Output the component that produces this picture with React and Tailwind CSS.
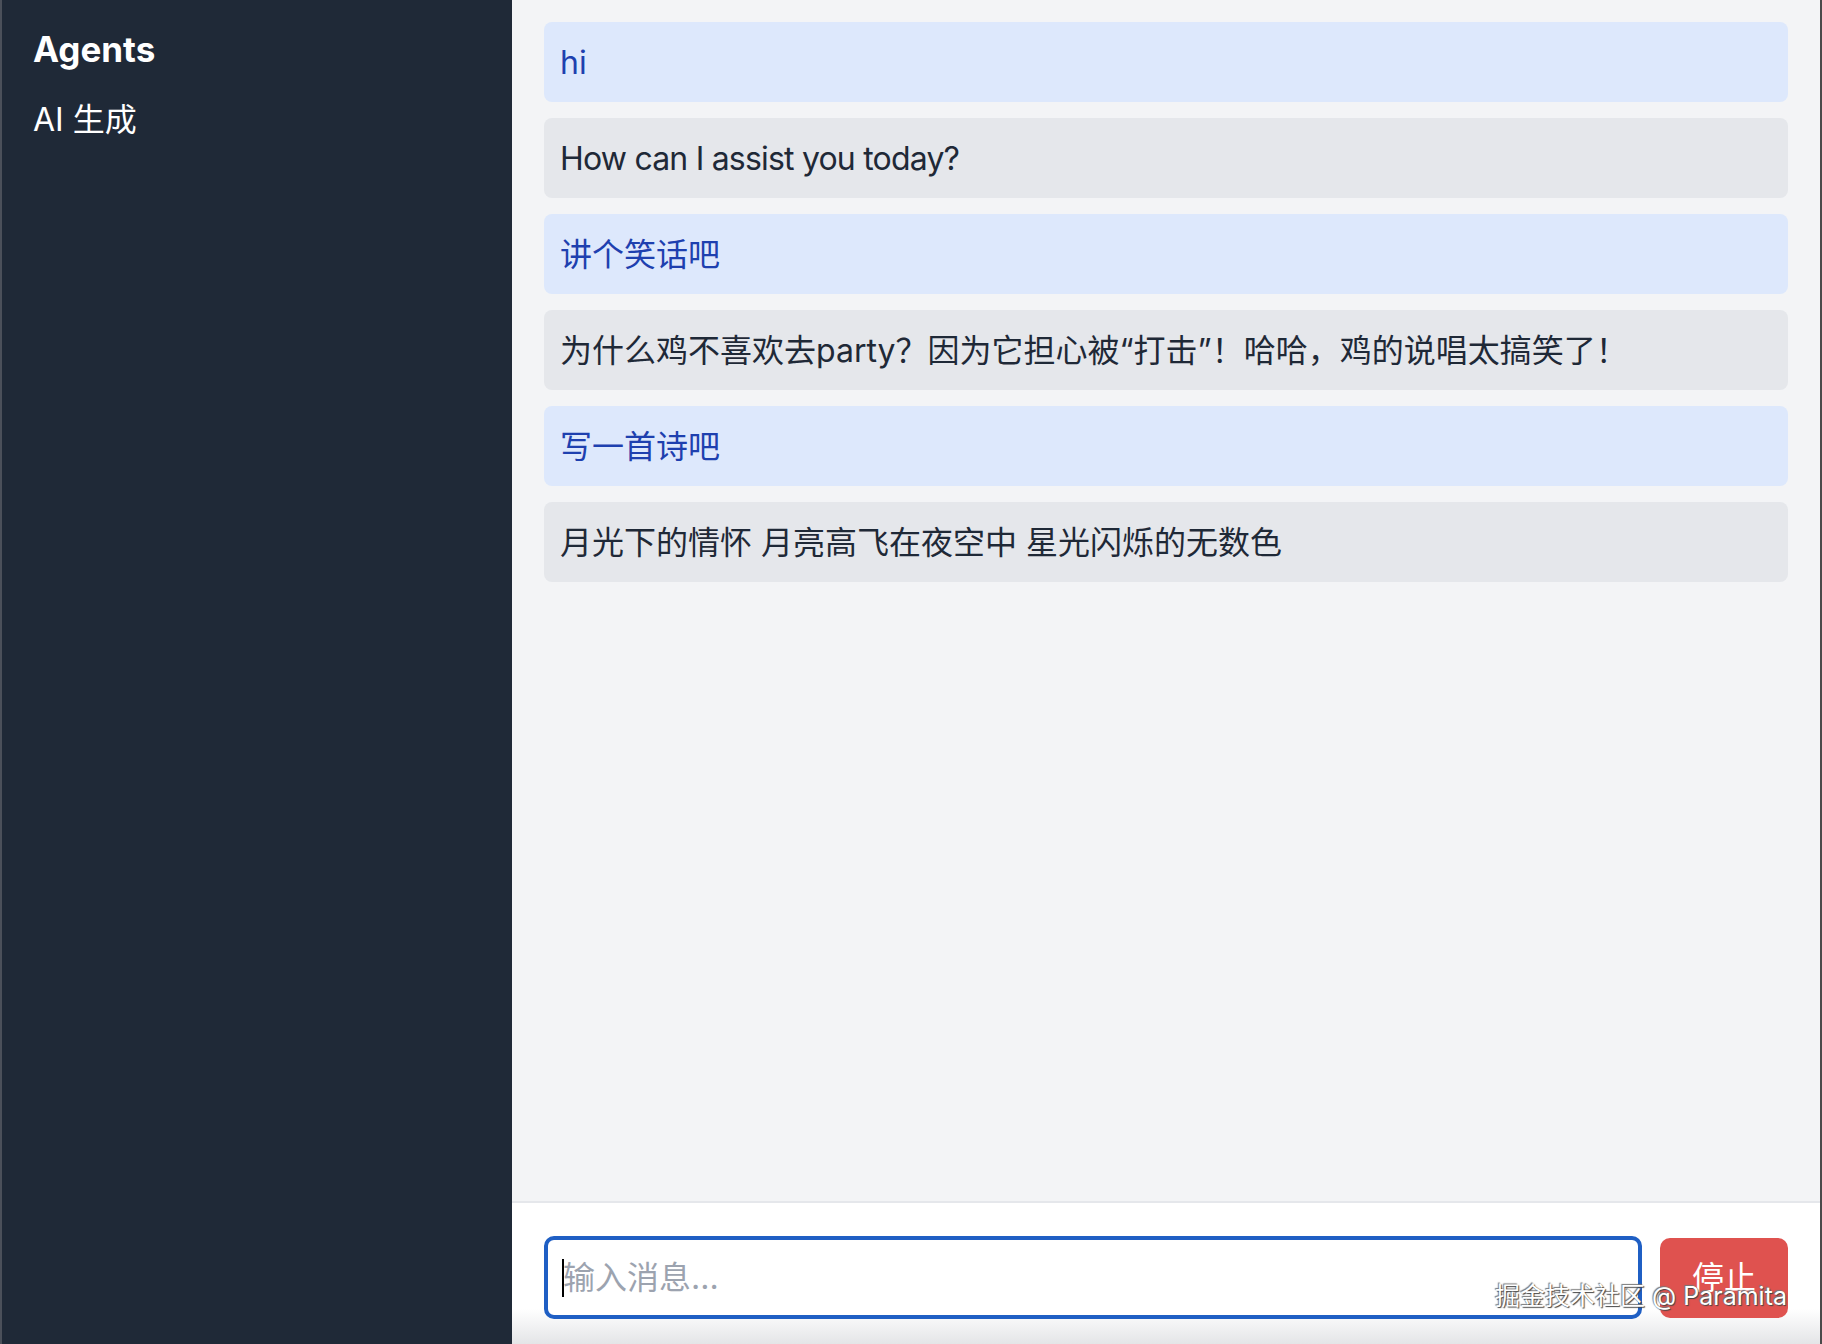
import { useState } from "react";

const messages = [
  { role: "user", content: "hi" },
  { role: "assistant", content: "How can I assist you today?", latin: true },
  { role: "user", content: "讲个笑话吧" },
  {
    role: "assistant",
    content: "为什么鸡不喜欢去party？因为它担心被“打击”！哈哈，鸡的说唱太搞笑了！",
  },
  { role: "user", content: "写一首诗吧" },
  { role: "assistant", content: "月光下的情怀 月亮高飞在夜空中 星光闪烁的无数色" },
];

const Sidebar = () => (
  <aside className="w-[512px] shrink-0 border-l-2 border-[#4b505a] bg-[#1f2937] px-[31px] pt-[22px] text-white">
    <h1 className="mb-[20px] text-[35px] font-bold leading-[54px]">Agents</h1>
    <ul>
      <li className="text-[32px] leading-[48px]">AI 生成</li>
    </ul>
  </aside>
);

const Message = ({ role, content, latin }) => (
  <div
    className={
      (role === "user"
        ? "rounded-lg bg-[#dde8fc] p-4 pt-[17px] pb-[15px] text-[32px] leading-[48px] text-[#1e40af]"
        : "rounded-lg bg-[#e5e7eb] p-4 pt-[17px] pb-[15px] text-[32px] leading-[48px] text-[#1f2937]") +
      (latin ? " tracking-[-0.025em]" : "")
    }
  >
    {content}
  </div>
);

export default function App() {
  const [input, setInput] = useState("");

  return (
    <div className="flex h-[1344px] w-full overflow-hidden bg-black font-['Inter','Noto_Sans_CJK_SC',sans-serif]">
      <Sidebar />
      <main className="flex flex-1 flex-col border-r-2 border-[#4a4a4a] bg-[#f3f4f6]">
        <div className="flex flex-1 flex-col gap-4 overflow-y-auto px-8 pt-[22px]">
          {messages.map((m, i) => (
            <Message key={i} role={m.role} content={m.content} latin={m.latin} />
          ))}
        </div>
        <div className="relative border-t-2 border-[#e5e7eb] bg-linear-to-b from-white from-75% to-[#e4e5e7] px-8 pb-[25px] pt-[33px]">
          <div className="flex items-center gap-[18px]">
            <div className="relative flex-1">
              <input
                value={input}
                onChange={(e) => setInput(e.target.value)}
                placeholder="输入消息..."
                className="h-[83px] w-full rounded-[10px] border-4 border-[#1f5fc4] bg-white pl-[15px] text-[32px] text-gray-800 outline-none placeholder:text-[#9ca3af]"
              />
              <span className="absolute left-[18px] top-[23px] h-[38px] w-[2px] bg-black" />
            </div>
            <button className="h-[80px] w-[128px] rounded-[10px] bg-[#df524f] text-[32px] text-white">
              停止
            </button>
          </div>
          <span className="absolute bottom-[35px] right-[33px] text-[25px] leading-none text-white [text-shadow:1px_1px_1px_#444,-1px_-1px_1px_#777]">
            掘金技术社区 @ Paramita
          </span>
        </div>
      </main>
    </div>
  );
}
